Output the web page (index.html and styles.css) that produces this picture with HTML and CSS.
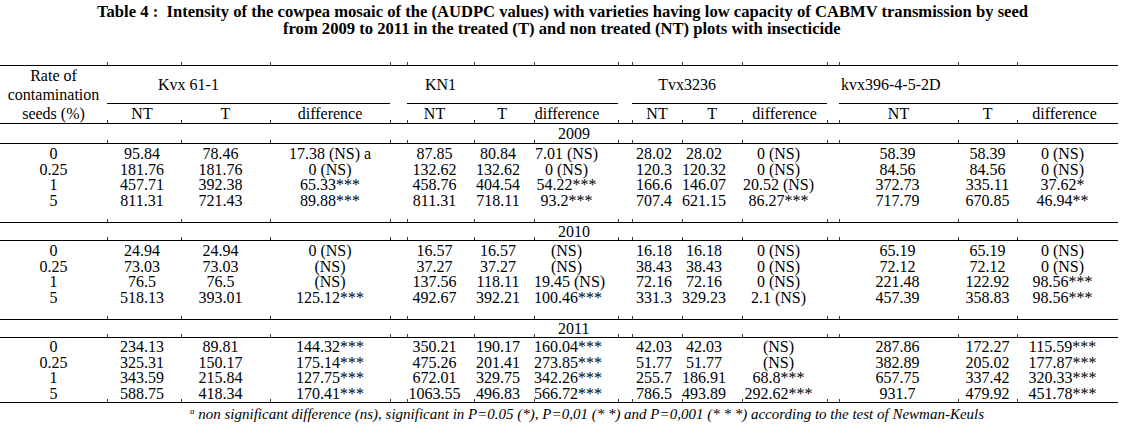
FILE: index.html
```html
<!DOCTYPE html>
<html lang="en">
<head>
<meta charset="utf-8">
<title>Table 4</title>
<link rel="stylesheet" href="styles.css">
</head>
<body>
<div class="page">
  <div class="title">
    <p class="l1">Table 4 :&nbsp; Intensity of the cowpea mosaic of the (AUDPC values) with varieties having low capacity of CABMV transmission by seed</p>
    <p class="l2">from 2009 to 2011 in the treated (T) and non treated (NT) plots with insecticide</p>
  </div>
  <div class="ticks"></div>
  <table class="data">
    <colgroup>
      <col class="w107"><col class="w74"><col class="w89"><col class="w120"><col class="w17">
      <col class="w67"><col class="w60"><col class="w84"><col class="w14">
      <col class="w50"><col class="w60"><col class="w85"><col class="w12">
      <col class="w119"><col class="w59"><col class="w101">
    </colgroup>
    <thead>
      <tr class="h1">
        <th rowspan="2" class="rate">Rate of<br>contamination<br>seeds (%)</th>
        <th colspan="2" class="grp">Kvx 61-1</th><th class="grp"></th>
        <th class="sp"></th>
        <th class="grp">KN1</th><th class="grp"></th><th class="grp"></th>
        <th class="sp"></th>
        <th colspan="2" class="grp">Tvx3236</th><th class="grp"></th>
        <th class="sp"></th>
        <th class="grp kvx">kvx396-4-5-2D</th><th class="grp"></th><th class="grp"></th>
      </tr>
      <tr class="h2">
        <th class="tk">NT</th><th class="tk">T</th><th class="tk">difference</th>
        <th class="tk"></th>
        <th class="tk">NT</th><th class="tk">T</th><th class="tk">difference</th>
        <th class="tk"></th>
        <th class="tk">NT</th><th class="tk">T</th><th class="tk">difference</th>
        <th class="tk"></th>
        <th class="tk">NT</th><th class="tk">T</th><th class="tk">difference</th>
      </tr>
    </thead>
    <tbody>
      <tr class="year"><td colspan="16">2009</td></tr>
      <tr class="first"><td>0</td><td>95.84</td><td>78.46</td><td>17.38 (NS) a</td><td></td><td>87.85</td><td>80.84</td><td>7.01 (NS)</td><td></td><td>28.02</td><td>28.02</td><td>0 (NS)</td><td></td><td>58.39</td><td>58.39</td><td>0 (NS)</td></tr>
      <tr><td>0.25</td><td>181.76</td><td>181.76</td><td>0 (NS)</td><td></td><td>132.62</td><td>132.62</td><td>0 (NS)</td><td></td><td>120.3</td><td>120.32</td><td>0 (NS)</td><td></td><td>84.56</td><td>84.56</td><td>0 (NS)</td></tr>
      <tr><td>1</td><td>457.71</td><td>392.38</td><td>65.33***</td><td></td><td>458.76</td><td>404.54</td><td>54.22***</td><td></td><td>166.6</td><td>146.07</td><td>20.52 (NS)</td><td></td><td>372.73</td><td>335.11</td><td>37.62*</td></tr>
      <tr class="last pad"><td>5</td><td>811.31</td><td>721.43</td><td>89.88***</td><td></td><td>811.31</td><td>718.11</td><td>93.2***</td><td></td><td>707.4</td><td>621.15</td><td>86.27***</td><td></td><td>717.79</td><td>670.85</td><td>46.94**</td></tr>

      <tr class="year"><td colspan="16">2010</td></tr>
      <tr class="first"><td>0</td><td>24.94</td><td>24.94</td><td>0 (NS)</td><td></td><td>16.57</td><td>16.57</td><td>(NS)</td><td></td><td>16.18</td><td>16.18</td><td>0 (NS)</td><td></td><td>65.19</td><td>65.19</td><td>0 (NS)</td></tr>
      <tr><td>0.25</td><td>73.03</td><td>73.03</td><td>(NS)</td><td></td><td>37.27</td><td>37.27</td><td>(NS)</td><td></td><td>38.43</td><td>38.43</td><td>0 (NS)</td><td></td><td>72.12</td><td>72.12</td><td>0 (NS)</td></tr>
      <tr><td>1</td><td>76.5</td><td>76.5</td><td>(NS)</td><td></td><td>137.56</td><td>118.11</td><td>19.45 (NS)</td><td></td><td>72.16</td><td>72.16</td><td>0 (NS)</td><td></td><td>221.48</td><td>122.92</td><td>98.56***</td></tr>
      <tr class="last pad"><td>5</td><td>518.13</td><td>393.01</td><td>125.12***</td><td></td><td>492.67</td><td>392.21</td><td>100.46***</td><td></td><td>331.3</td><td>329.23</td><td>2.1 (NS)</td><td></td><td>457.39</td><td>358.83</td><td>98.56***</td></tr>

      <tr class="year"><td colspan="16">2011</td></tr>
      <tr class="first tight"><td>0</td><td>234.13</td><td>89.81</td><td>144.32***</td><td></td><td>350.21</td><td>190.17</td><td>160.04***</td><td></td><td>42.03</td><td>42.03</td><td>(NS)</td><td></td><td>287.86</td><td>172.27</td><td>115.59***</td></tr>
      <tr><td>0.25</td><td>325.31</td><td>150.17</td><td>175.14***</td><td></td><td>475.26</td><td>201.41</td><td>273.85***</td><td></td><td>51.77</td><td>51.77</td><td>(NS)</td><td></td><td>382.89</td><td>205.02</td><td>177.87***</td></tr>
      <tr><td>1</td><td>343.59</td><td>215.84</td><td>127.75***</td><td></td><td>672.01</td><td>329.75</td><td>342.26***</td><td></td><td>255.7</td><td>186.91</td><td>68.8***</td><td></td><td>657.75</td><td>337.42</td><td>320.33***</td></tr>
      <tr class="last"><td>5</td><td>588.75</td><td>418.34</td><td>170.41***</td><td></td><td>1063.55</td><td>496.83</td><td>566.72***</td><td></td><td>786.5</td><td>493.89</td><td>292.62***</td><td></td><td>931.7</td><td>479.92</td><td>451.78***</td></tr>
    </tbody>
  </table>
  <p class="note"><sup>a</sup> non significant difference (ns), significant in P=0.05 (*), P=0,01 (* *) and P=0,001 (* * *) according to the test of Newman-Keuls</p>
</div>
</body>
</html>
```
FILE: styles.css
```css
html, body {
  margin: 0;
  padding: 0;
  background: #fff;
}
body {
  font-family: "Liberation Serif", "Times New Roman", serif;
  color: #000;
}
.page {
  width: 1118px;
  --tk: linear-gradient(#3a3a3a, #3a3a3a);
}
.title {
  height: 59px;
  padding-top: 3px;
  font-weight: bold;
  font-size: 16.6px;
  line-height: 17px;
  white-space: nowrap;
}
.title p {
  margin: 0;
}
.title .l1 {
  padding-left: 97px;
}
.title .l2 {
  padding-left: 283px;
}
/* tick marks that sit just above each full rule */
.ticks,
.data tr.year td {
  background-image: var(--tk), var(--tk), var(--tk), var(--tk), var(--tk), var(--tk), var(--tk), var(--tk),
    var(--tk), var(--tk), var(--tk), var(--tk), var(--tk), var(--tk), var(--tk);
  background-repeat: no-repeat;
  background-size: 1px 3px;
  background-position: 107px 100%, 181px 100%, 270px 100%, 390px 100%, 407px 100%, 474px 100%, 534px 100%,
    618px 100%, 632px 100%, 682px 100%, 742px 100%, 827px 100%, 839px 100%, 958px 100%, 1017px 100%;
}
.ticks {
  height: 3px;
}
.data {
  width: 1118px;
  table-layout: fixed;
  border-collapse: separate;
  border-spacing: 0;
  border-top: 1px solid #000;
  font-size: 16px;
}
.w107 { width: 107px; }
.w74 { width: 74px; }
.w89 { width: 89px; }
.w120 { width: 120px; }
.w17 { width: 17px; }
.w67 { width: 67px; }
.w60 { width: 60px; }
.w84 { width: 84px; }
.w14 { width: 14px; }
.w50 { width: 50px; }
.w85 { width: 85px; }
.w12 { width: 12px; }
.w119 { width: 119px; }
.w59 { width: 59px; }
.w101 { width: 101px; }

.data th,
.data td {
  padding: 0;
  font-weight: normal;
  text-align: center;
  vertical-align: middle;
  white-space: nowrap;
}
.data tr.h1 th {
  height: 37px;
  line-height: 18px;
}
.data tr.h1 th.rate {
  line-height: 19px;
  border-bottom: 1px solid #000;
}
.data tr.h1 th.grp {
  border-bottom: 1px solid #000;
}
.data tr.h1 th.kvx {
  text-align: left;
  padding-left: 2px;
}
.data tr.h2 th {
  height: 19px;
  line-height: 18px;
  border-bottom: 1px solid #000;
}
/* header sub-columns: slight optical offsets as in the source */
.data tr.h2 th:nth-child(1) { padding-right: 4px; }
.data tr.h2 th:nth-child(5) { padding-right: 12px; }
.data tr.h2 th:nth-child(6) { padding-right: 4px; }
.data tr.h2 th:nth-child(7) { padding-right: 18px; }
.data tr.h2 th:nth-child(15) { padding-right: 6px; }

.data th.tk,
.data tr.last td {
  background-image: var(--tk);
  background-repeat: no-repeat;
  background-size: 1px 3px;
  background-position: 0 100%;
}
.data tr.last td:first-child {
  background-image: none;
}
.data tr.year td {
  height: 17px;
  line-height: 17px;
  text-align: left;
  padding-left: 558px;
  border-bottom: 1px solid #000;
}
.data tr.year:first-child td {
  height: 19px;
}
.data tbody td {
  line-height: 15.5px;
}
/* data cells: per-column offsets */
.data tbody tr:not(.year) td:nth-child(2) { padding-right: 4px; }
.data tbody tr:not(.year) td:nth-child(3) { padding-right: 10px; }
.data tbody tr:not(.year) td:nth-child(6) { padding-right: 12px; }
.data tbody tr:not(.year) td:nth-child(7) { padding-right: 12px; }
.data tbody tr:not(.year) td:nth-child(8) { padding-right: 19px; }
.data tbody tr:not(.year) td:nth-child(10) { padding-right: 6px; }
.data tbody tr:not(.year) td:nth-child(11) { padding-right: 16px; }
.data tbody tr:not(.year) td:nth-child(12) { padding-right: 12px; }
.data tbody tr:not(.year) td:nth-child(14) { padding-right: 2px; }
.data tbody tr:not(.year) td:nth-child(16) { padding-right: 10px; }

.data tr.first td {
  padding-top: 2px;
}
.data tr.first.tight td {
  padding-top: 1px;
}
.data tr.last td {
  border-bottom: 1px solid #000;
  padding-bottom: 1px;
}
.data tr.last.pad td {
  padding-bottom: 14px;
}
.note {
  margin: 0;
  padding: 3px 0 0 190px;
  font-style: italic;
  font-size: 15px;
  line-height: 17px;
}
.note sup {
  font-size: 9px;
  line-height: 0;
  vertical-align: 5px;
}
```
